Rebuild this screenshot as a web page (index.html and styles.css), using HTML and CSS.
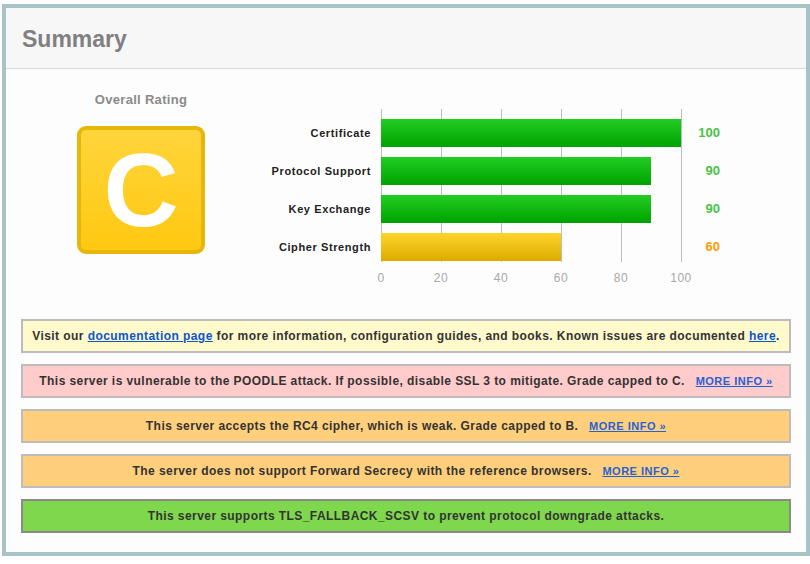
FILE: index.html
```html
<!DOCTYPE html>
<html>
<head>
<meta charset="utf-8">
<link rel="stylesheet" href="styles.css">
</head>
<body>
<div class="panel">
  <div class="panel-head">Summary</div>
  <div class="panel-body">
    <div class="overview">
      <div class="rating">
        <div class="rating-title">Overall Rating</div>
        <div class="grade">C</div>
      </div>
      <div class="chart">
        <div class="chart-main">
          <div class="labels">
            <div class="label">Certificate</div>
            <div class="label">Protocol Support</div>
            <div class="label">Key Exchange</div>
            <div class="label">Cipher Strength</div>
          </div>
          <div class="plot">
            <div class="bar good" style="width:300px"></div>
            <div class="bar good" style="width:270px"></div>
            <div class="bar good" style="width:270px"></div>
            <div class="bar warn" style="width:180px"></div>
          </div>
          <div class="values">
            <div class="value good-text">100</div>
            <div class="value good-text">90</div>
            <div class="value good-text">90</div>
            <div class="value warn-text">60</div>
          </div>
        </div>
        <div class="axis">
          <span>0</span><span>20</span><span>40</span><span>60</span><span>80</span><span>100</span>
        </div>
      </div>
    </div>
    <div class="notices">
      <div class="notice info">Visit our <a href="#">documentation page</a> for more information, configuration guides, and books. Known issues are documented <a href="#">here</a>.</div>
      <div class="notice error">This server is vulnerable to the POODLE attack. If possible, disable SSL 3 to mitigate. Grade capped to C. <a class="more" href="#">MORE INFO »</a></div>
      <div class="notice warning">This server accepts the RC4 cipher, which is weak. Grade capped to B. <a class="more" href="#">MORE INFO »</a></div>
      <div class="notice warning">The server does not support Forward Secrecy with the reference browsers. <a class="more" href="#">MORE INFO »</a></div>
      <div class="notice good-notice">This server supports TLS_FALLBACK_SCSV to prevent protocol downgrade attacks.</div>
    </div>
  </div>
</div>
</body>
</html>
```
FILE: styles.css
```css
html, body {
  margin: 0;
  padding: 0;
  background: #ffffff;
  font-family: "Liberation Sans", Arial, sans-serif;
}
.panel {
  margin: 4px 0 0 2px;
  border: 4px solid #a7c3c7;
  height: 544px;
  background: #fdfdfd;
}
.panel-head {
  height: 61px;
  box-sizing: border-box;
  background: #f7f7f7;
  border-bottom: 1px solid #d2dade;
  padding-left: 16px;
  font-size: 23px;
  font-weight: bold;
  color: #808080;
  line-height: 62px;
}
.panel-body {
  padding: 0 15px;
}
.overview {
  display: flex;
  height: 250px;
  margin: 0 -15px;
}
.rating {
  width: 270px;
  display: flex;
  flex-direction: column;
  align-items: center;
  padding-top: 23px;
}
.rating-title {
  font-size: 13px;
  font-weight: bold;
  color: #8a8a8a;
  line-height: 16px;
  letter-spacing: 0.3px;
}
.grade {
  margin-top: 18px;
  width: 128px;
  height: 128px;
  box-sizing: border-box;
  border: 4px solid #e7b60b;
  border-radius: 9px;
  background: linear-gradient(#ffd53c, #ffc811);
  color: #ffffff;
  font-weight: bold;
  font-size: 104px;
  line-height: 120px;
  text-align: center;
}
.chart {
  margin-top: 40px;
}
.chart-main {
  display: flex;
}
.labels, .values {
  padding-top: 10px;
  display: flex;
  flex-direction: column;
  gap: 10px;
}
.labels {
  width: 95px;
  margin-right: 10px;
  align-items: flex-end;
}
.label {
  height: 28px;
  line-height: 28px;
  font-size: 11px;
  font-weight: bold;
  color: #222222;
  letter-spacing: 0.6px;
  white-space: nowrap;
}
.plot {
  width: 301px;
  padding: 10px 0 1px;
  display: flex;
  flex-direction: column;
  gap: 10px;
  background: repeating-linear-gradient(to right, #bdbdbd 0, #bdbdbd 1px, transparent 1px, transparent 60px);
}
.bar {
  height: 28px;
}
.bar.good {
  background: linear-gradient(#22cd22, #00a300);
}
.bar.warn {
  background: linear-gradient(#ffd52b, #dcab00);
}
.values {
  width: 38px;
  align-items: flex-end;
}
.value {
  height: 28px;
  line-height: 28px;
  font-size: 13px;
  font-weight: bold;
}
.good-text { color: #47c347; }
.warn-text { color: #ff9a00; }
.axis {
  display: flex;
  margin-left: 75px;
  margin-top: 9px;
}
.axis span {
  width: 60px;
  text-align: center;
  font-size: 12px;
  letter-spacing: 0.5px;
  color: #a8a8a8;
  line-height: 14px;
}
.notices {
  display: flex;
  flex-direction: column;
  gap: 11px;
}
.notice {
  height: 34px;
  box-sizing: border-box;
  border: 2px solid #bcbcbc;
  text-align: center;
  line-height: 30px;
  font-size: 12px;
  font-weight: bold;
  color: #333333;
  letter-spacing: 0.43px;
  white-space: nowrap;
}
.notice a {
  color: #0b56cc;
  text-decoration: underline;
}
.notice a.more {
  color: #2762d4;
  font-size: 11px;
  letter-spacing: 0.5px;
  margin-left: 7px;
}
.info { background: #fff9cc; }
.error { background: #ffcbcb; }
.warning { background: #ffcf7b; }
.good-notice { background: #7ed74d; border-color: #8a8a8a; }
```
